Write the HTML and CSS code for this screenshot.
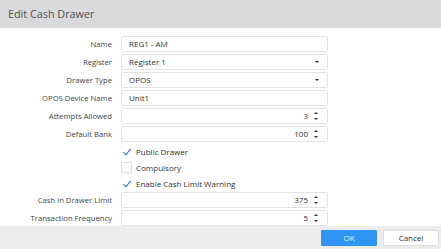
FILE: index.html
```html
<!DOCTYPE html>
<html lang="en">
<head>
    <meta charset="UTF-8">
    <title>Edit Cash Drawer</title>
    <link rel="stylesheet" href="styles.css">
</head>
<body>
    <div class="dialog">
        <div class="dialog-header">Edit Cash Drawer</div>
        <form class="dialog-body">
            <div class="row">
                <label>Name</label>
                <div class="field">REG1 - AM</div>
            </div>
            <div class="row">
                <label>Register</label>
                <div class="field select">Register 1<span class="caret"></span></div>
            </div>
            <div class="row">
                <label>Drawer Type</label>
                <div class="field select">OPOS<span class="caret"></span></div>
            </div>
            <div class="row">
                <label>OPOS Device Name</label>
                <div class="field">Unit1</div>
            </div>
            <div class="row">
                <label>Attempts Allowed</label>
                <div class="field number">3<span class="spin"></span></div>
            </div>
            <div class="row">
                <label>Default Bank</label>
                <div class="field number">100<span class="spin"></span></div>
            </div>
            <div class="row check-row">
                <label></label>
                <div class="check"><span class="box checked"></span>Public Drawer</div>
            </div>
            <div class="row check-row">
                <label></label>
                <div class="check"><span class="box"></span>Compulsory</div>
            </div>
            <div class="row check-row">
                <label></label>
                <div class="check"><span class="box checked"></span>Enable Cash Limit Warning</div>
            </div>
            <div class="row">
                <label>Cash in Drawer Limit</label>
                <div class="field number">375<span class="spin"></span></div>
            </div>
            <div class="row">
                <label>Transaction Frequency</label>
                <div class="field number">5<span class="spin"></span></div>
            </div>
        </form>
        <div class="dialog-footer">
            <button class="btn btn-primary">OK</button>
            <button class="btn">Cancel</button>
        </div>
    </div>
</body>
</html>
```

FILE: styles.css
```css
body { margin: 0; font-family: "Open Sans", "Noto Sans", sans-serif; color: #333; background: #fff; }
.dialog { width: 441px; height: 249px; display: flex; flex-direction: column; }
.dialog-header { height: 28px; box-sizing: border-box; padding: 7px 8px 0; background: #dadadd; font-size: 10.8px; color: #505050; line-height: 14px; }
.dialog-body { height: 198px; box-sizing: border-box; padding-top: 7px; }
.row { display: flex; align-items: center; height: 18px; }
.row label { width: 121px; text-align: right; font-size: 7.7px; color: #444; padding-right: 9px; box-sizing: border-box; }
.field { position: relative; width: 207px; height: 16px; box-sizing: border-box; border: 1px solid #e2e2e2; border-radius: 2px; padding: 0 7px; font-size: 8px; line-height: 14px; color: #333; }
.select .caret { position: absolute; right: 8px; top: 6px; border-left: 2.5px solid transparent; border-right: 2.5px solid transparent; border-top: 2.5px solid #222; }
.number { text-align: right; padding-right: 19px; }
.spin { position: absolute; right: 8px; top: 3px; width: 5px; height: 8px; }
.spin::before, .spin::after { content: ""; position: absolute; left: 0; border-left: 2.5px solid transparent; border-right: 2.5px solid transparent; }
.spin::before { top: 0; border-bottom: 2.5px solid #333; }
.spin::after { bottom: 0; border-top: 2.5px solid #333; }
.check-row { height: 16px; }
.check-row:first-of-type, .row + .check-row { margin-top: 0; }
.check { display: flex; align-items: center; font-size: 8px; color: #333; }
.box { position: relative; width: 11px; height: 11px; margin-right: 4px; box-sizing: border-box; border: 1px solid #e0e0e0; }
.box.checked { border-color: transparent; }
.box.checked::after { content: ""; position: absolute; left: 3px; top: 0; width: 3px; height: 7px; border-right: 1.5px solid #1a6fd6; border-bottom: 1.5px solid #1a6fd6; transform: rotate(40deg); }
.dialog-footer { flex: 1; background: #ececec; display: flex; justify-content: flex-end; align-items: center; gap: 6px; padding-right: 2px; }
.btn { width: 56px; height: 16px; padding: 0; font-family: inherit; font-size: 8px; border: 1px solid #dcdcdc; background: #fff; color: #333; border-radius: 1px; }
.btn-primary { background: #2e95f2; border-color: #2e95f2; color: #e8f3ff; }
```
